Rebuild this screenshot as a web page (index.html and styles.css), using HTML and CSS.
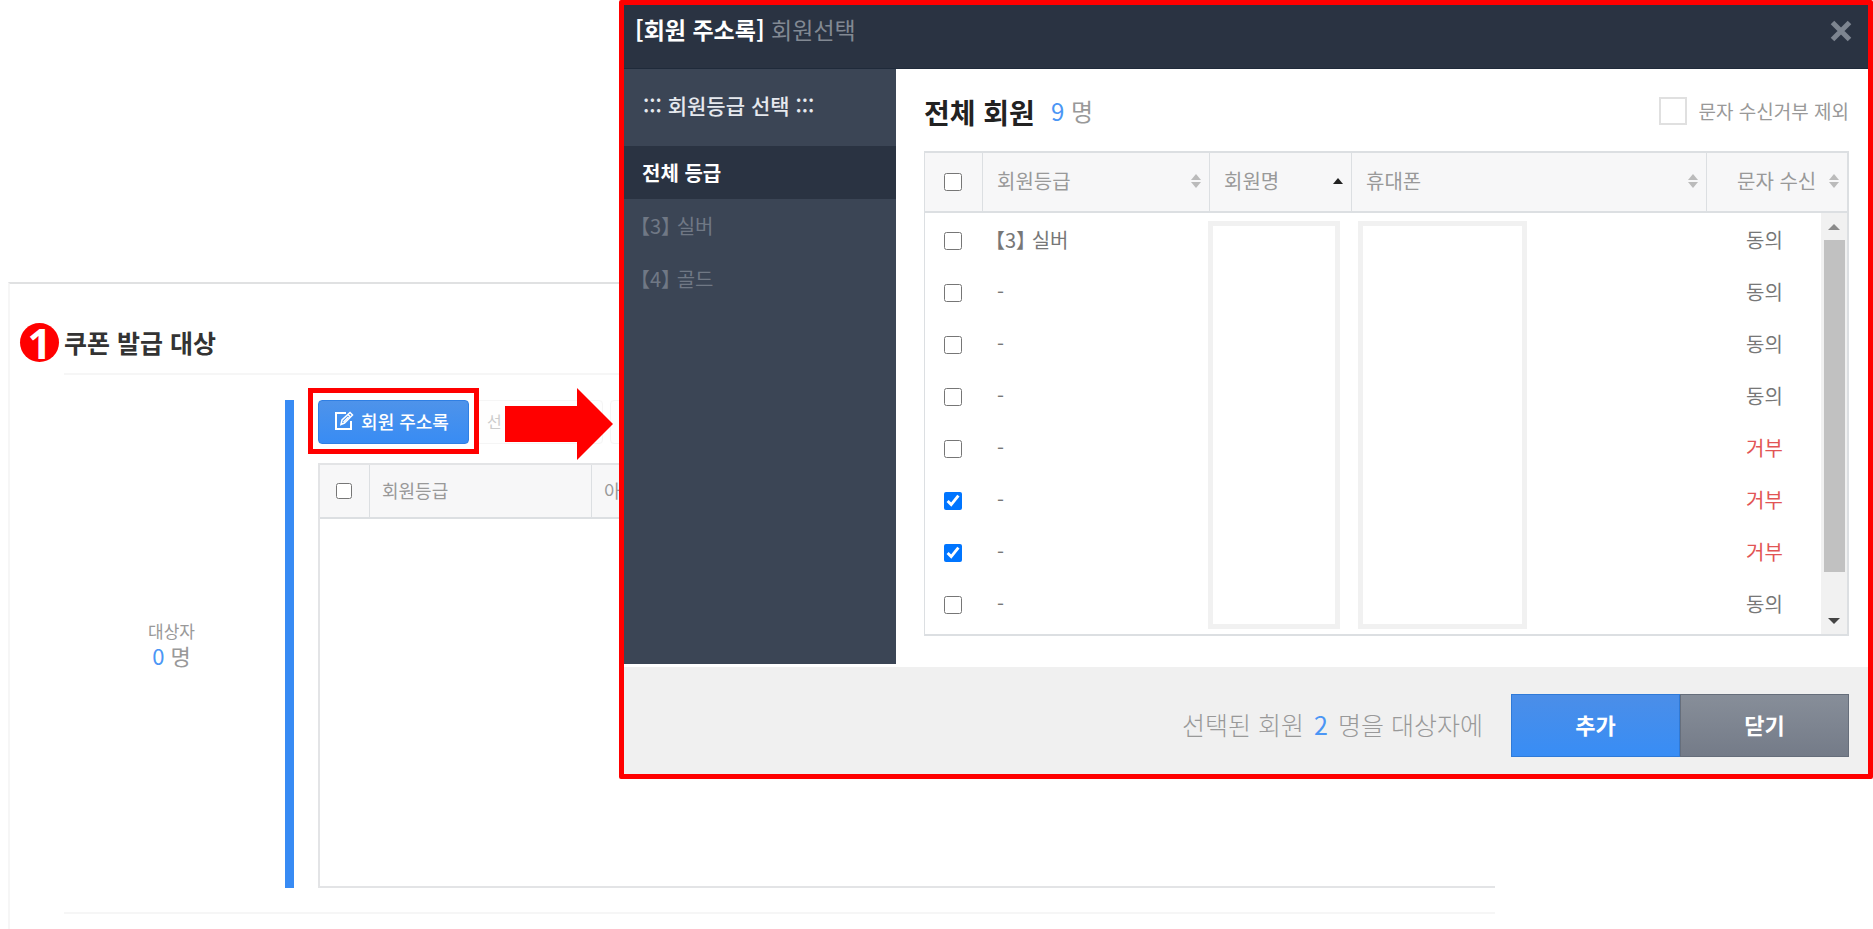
FILE: index.html
```html
<!DOCTYPE html>
<html lang="ko">
<head>
    <meta charset="UTF-8">
    <meta name="viewport" content="width=device-width, initial-scale=1.0">
    <title>쿠폰 발급 대상</title>
    <link rel="stylesheet" href="styles.css">
</head>
<body>
    <main class="panel">
        <span class="step">1</span>
        <h2 class="panel-title">쿠폰 발급 대상</h2>
        <div class="target">
            <div class="target-count">
                <span>대상자</span>
                <span class="target-num"><b>0</b> 명</span>
            </div>
            <div class="target-body">
                <div class="toolbar">
                    <button type="button" class="btn-address">
                        <svg width="20" height="20" viewBox="0 0 20 20" fill="none" stroke="currentColor" stroke-width="2">
                            <path d="M12 2H2V18H17V10"/>
                            <path d="M7 13.500l1-4.500 8-7.500 2.500 2.500-8 8z" stroke-width="1.500"/>
                            <path d="M14 3.500l2.500 2.500M9.500 11l5-5" stroke-width="1.500"/>
                        </svg>
                        회원 주소록
                    </button>
                    <button type="button" class="btn-plain">선</button>
                    <button type="button" class="btn-plain" aria-label="더보기"></button>
                </div>
                <div class="target-list">
                    <table class="target-table">
                        <colgroup><col class="col-tcheck"><col class="col-tgrade"><col></colgroup>
                        <thead>
                            <tr>
                                <th class="check"><input type="checkbox" aria-label="전체 선택"></th>
                                <th>회원등급</th>
                                <th>아이디</th>
                            </tr>
                        </thead>
                    </table>
                </div>
            </div>
        </div>
    </main>

    <div class="focus-box"></div>
    <svg class="arrow" width="108" height="72" viewBox="0 0 108 72"><path d="M0 18H72V0L108 36L72 72V54H0Z" fill="#f00"/></svg>

    <section class="modal">
        <header class="modal-head">
            <h1><strong>[회원 주소록]</strong> 회원선택</h1>
            <button type="button" class="close" aria-label="창 닫기">
                <svg width="22" height="22" viewBox="0 0 22 22" stroke="currentColor" stroke-width="5"><path d="M2.500 2.500L19.500 19.500M19.500 2.500L2.500 19.500"/></svg>
            </button>
        </header>
        <div class="modal-body">
            <nav class="grades">
                <h3>::: 회원등급 선택 :::</h3>
                <a href="#" class="active">전체 등급</a>
                <a href="#" class="bracket">【3】 실버</a>
                <a href="#" class="bracket">【4】 골드</a>
            </nav>
            <div class="members">
                <div class="members-head">
                    <h2>전체 회원</h2>
                    <span class="total"><b>9</b> 명</span>
                    <label class="exclude"><input type="checkbox">문자 수신거부 제외</label>
                </div>
                <div class="list">
                    <table class="member-table">
                        <colgroup><col class="col-check"><col class="col-grade"><col class="col-name"><col><col class="col-sms"></colgroup>
                        <thead>
                            <tr>
                                <th class="check"><input type="checkbox" aria-label="전체 선택"></th>
                                <th><div class="th">회원등급<i class="sort"></i></div></th>
                                <th><div class="th">회원명<i class="sort asc"></i></div></th>
                                <th><div class="th">휴대폰<i class="sort"></i></div></th>
                                <th class="sms-head"><div class="th">문자 수신<i class="sort"></i></div></th>
                            </tr>
                        </thead>
                        <tbody>
                            <tr><td class="check"><input type="checkbox" aria-label="선택"></td><td class="bracket">【3】 실버</td><td></td><td></td><td class="sms">동의</td></tr>
                            <tr><td class="check"><input type="checkbox" aria-label="선택"></td><td>-</td><td></td><td></td><td class="sms">동의</td></tr>
                            <tr><td class="check"><input type="checkbox" aria-label="선택"></td><td>-</td><td></td><td></td><td class="sms">동의</td></tr>
                            <tr><td class="check"><input type="checkbox" aria-label="선택"></td><td>-</td><td></td><td></td><td class="sms">동의</td></tr>
                            <tr><td class="check"><input type="checkbox" aria-label="선택"></td><td>-</td><td></td><td></td><td class="sms deny">거부</td></tr>
                            <tr><td class="check"><input type="checkbox" aria-label="선택" checked></td><td>-</td><td></td><td></td><td class="sms deny">거부</td></tr>
                            <tr><td class="check"><input type="checkbox" aria-label="선택" checked></td><td>-</td><td></td><td></td><td class="sms deny">거부</td></tr>
                            <tr><td class="check"><input type="checkbox" aria-label="선택"></td><td>-</td><td></td><td></td><td class="sms">동의</td></tr>
                        </tbody>
                    </table>
                    <!-- 개인정보 가림 -->
                    <div class="mask mask-name"></div>
                    <div class="mask mask-phone"></div>
                    <div class="scrollbar">
                        <span class="sb-up"></span>
                        <span class="sb-thumb"></span>
                        <span class="sb-down"></span>
                    </div>
                </div>
            </div>
        </div>
        <footer class="modal-foot">
            <p>선택된 회원 <b>2</b> 명을 대상자에</p>
            <div class="actions">
                <button type="button" class="btn-add">추가</button>
                <button type="button" class="btn-close">닫기</button>
            </div>
        </footer>
    </section>
</body>
</html>
```

FILE: styles.css
```css
* {
    box-sizing: border-box;
}
body {
    display: flex;
    flex-direction: column;
    position: relative;
    min-height: 100vh;
    margin: 0;
    background-color: #fff;
    color: #999;
    font-family: "Noto Sans CJK KR", sans-serif;
    font-size: 20px;
}
h1, h2, h3, p {
    margin: 0;
    font-weight: normal;
}
b {
    color: #4b96f5;
    font-weight: normal;
}
button {
    padding: 0;
    border: none;
    font-family: inherit;
    cursor: pointer;
}
input[type="checkbox"] {
    display: block;
    width: 18px;
    height: 18px;
    margin: 0 auto;
}
table {
    width: 100%;
    border-collapse: separate;
    border-spacing: 0;
    table-layout: fixed;
}
th, td {
    padding: 0 0 2px 14px;
    font-weight: normal;
    text-align: left;
    line-height: 28px;
}
th {
    border-right: 1px solid #dcdfe2;
    border-bottom: 2px solid #dcdfe2;
    background-color: #f7f7f8;
}
th:last-child {
    border-right: none;
}
.bracket {
    font-feature-settings: "halt";
}

/* coupon target panel */
.panel {
    position: relative;
    flex: 1;
    margin: 282px 378px 0 8px;
    padding-left: 54px;
    border-top: 2px solid #e0e1e2;
    border-left: 2px solid #f6f6f6;
}
.step {
    position: absolute;
    top: 39px;
    left: 10px;
    width: 39px;
    height: 39px;
    border-radius: 50%;
    background-color: #f00;
    color: #fff;
    font-family: "Open Sans", sans-serif;
    font-size: 42px;
    font-weight: bold;
    line-height: 39px;
    text-align: center;
}
.panel-title {
    padding: 40px 0 13px;
    border-bottom: 2px solid #f6f6f6;
    color: #333;
    font-size: 25px;
    font-weight: bold;
    line-height: 36px;
}
.target {
    display: flex;
    padding: 25px 0 24px;
    border-bottom: 2px solid #f6f6f6;
}
.target-count {
    display: flex;
    flex-direction: column;
    justify-content: center;
    width: 230px;
    padding: 0 6px 2px 0;
    border-right: 9px solid #388bf4;
    font-size: 17px;
    line-height: 25px;
    text-align: center;
}
.target-num {
    font-size: 22px;
}
.target-body {
    flex: 1;
    margin-left: 24px;
}
.toolbar {
    display: flex;
    gap: 7px;
    height: 44px;
    margin-bottom: 19px;
}
.btn-address {
    display: flex;
    align-items: center;
    justify-content: center;
    gap: 7px;
    width: 151px;
    padding: 0 4px 2px 0;
    border: 1px solid #2f7fe4;
    border-radius: 4px;
    background: linear-gradient(#4e93ea, #388cf4);
    color: #fff;
    font-size: 18px;
    font-weight: 500;
}
.btn-plain {
    width: 127px;
    padding: 0 0 2px 10px;
    border: 1px solid #f5f5f5;
    border-radius: 4px;
    background-color: #fefefe;
    color: #ccc;
    font-size: 16px;
    text-align: left;
}
.target-list {
    height: 425px;
    border: 2px solid #e3e4e6;
    border-right: none;
}
.target-table th {
    height: 54px;
    padding-left: 12px;
    font-size: 18px;
}
.target-table input {
    width: 16px;
    height: 16px;
}
.target-table .check, .member-table .check {
    padding: 0 2px 0 0;
}
.col-tcheck {
    width: 50px;
}
.col-tgrade {
    width: 222px;
}

/* callouts */
.focus-box {
    position: absolute;
    top: 388px;
    left: 308px;
    width: 171px;
    height: 66px;
    border: 5px solid #f00;
}
.arrow {
    position: absolute;
    top: 388px;
    left: 505px;
}

/* member popup */
.modal {
    position: absolute;
    top: 0;
    right: 0;
    left: 619px;
    border: 5px solid #f00;
    border-radius: 2px;
    background-color: #fff;
}
.modal-head {
    display: flex;
    justify-content: space-between;
    height: 64px;
    padding: 8px 16px 0 11px;
    border-bottom: 1px solid #1f2a3a;
    background-color: #2a3342;
}
.modal-head h1 {
    color: #828993;
    font-size: 23px;
    line-height: 32px;
}
.modal-head strong {
    color: #fff;
}
.close {
    height: 36px;
    background: none;
    color: #7d8590;
}
.close svg {
    display: block;
}
.modal-body {
    display: flex;
    margin-bottom: 3px;
}
.grades {
    width: 272px;
    background-color: #3b4555;
}
.grades h3 {
    padding: 20px 0 25px 19px;
    color: #e6e9ee;
    font-size: 21px;
    font-weight: 500;
    line-height: 32px;
}
.grades a {
    display: block;
    padding-left: 18px;
    color: #707885;
    line-height: 53px;
    text-decoration: none;
}
.grades .bracket {
    padding-left: 16px;
}
.grades .active {
    background-color: #2a3342;
    color: #fff;
    font-weight: bold;
}
.members {
    flex: 1;
    padding: 22px 19px 28px 28px;
}
.members-head {
    display: flex;
    align-items: center;
    height: 42px;
    margin-bottom: 18px;
}
.members-head h2 {
    color: #222;
    font-size: 28px;
    font-weight: bold;
}
.total {
    margin-left: 16px;
    padding-bottom: 3px;
    font-size: 24px;
}
.exclude {
    display: flex;
    align-items: center;
    gap: 12px;
    margin-left: auto;
    padding-bottom: 3px;
    font-size: 19px;
}
.exclude input[type="checkbox"] {
    width: 28px;
    height: 28px;
    border: 2px solid #e0e0e0;
    background-color: #fff;
    appearance: none;
}
.exclude input[type="checkbox"]:checked {
    background-color: #388bf4;
}
.list {
    position: relative;
    padding-bottom: 3px;
    border: 1px solid #dcdfe2;
    border-width: 2px 2px 2px 1px;
}
.member-table th {
    height: 60px;
}
.member-table tbody::before {
    content: "";
    display: block;
    height: 2px;
}
.member-table td {
    height: 52px;
    padding-bottom: 2px;
    color: #777;
}
.member-table .bracket {
    padding-left: 12px;
}
.col-check {
    width: 58px;
}
.col-grade {
    width: 227px;
}
.col-name {
    width: 142px;
}
.col-sms {
    width: 140px;
}
.th {
    display: flex;
    align-items: center;
    justify-content: space-between;
    padding-right: 8px;
}
.member-table .sms-head {
    padding-left: 30px;
}
.member-table .sms {
    padding-left: 39px;
}
.member-table .deny {
    color: #e25555;
}
.sort::before, .sort::after {
    content: "";
    display: block;
    border: 5px solid transparent;
    border-top-width: 0;
    border-bottom: 6px solid #bbb;
}
.sort::after {
    margin-top: 2px;
    border-top: 6px solid #bbb;
    border-bottom-width: 0;
}
.sort.asc::before {
    border-bottom-color: #222;
}
.sort.asc::after {
    display: none;
}
.mask {
    position: absolute;
    top: 68px;
    height: 408px;
    border: 5px solid #f1f1f1;
    background-color: #fff;
}
.mask-name {
    left: 283px;
    width: 132px;
}
.mask-phone {
    left: 433px;
    width: 169px;
}
.scrollbar {
    display: flex;
    flex-direction: column;
    align-items: center;
    position: absolute;
    top: 60px;
    right: 0;
    bottom: 0;
    width: 26px;
    padding: 11px 0 10px;
    background-color: #f1f1f1;
}
.sb-up {
    border: 6px solid transparent;
    border-top-width: 0;
    border-bottom: 6px solid #8a8a8a;
}
.sb-thumb {
    width: 21px;
    height: 332px;
    margin-top: 10px;
    background-color: #c1c1c1;
}
.sb-down {
    margin-top: auto;
    border: 6px solid transparent;
    border-top: 6px solid #444;
    border-bottom-width: 0;
}
.modal-foot {
    display: flex;
    align-items: center;
    justify-content: flex-end;
    gap: 28px;
    padding: 27px 19px 17px;
    background-color: #f0f0f0;
}
.modal-foot p {
    padding-bottom: 4px;
    font-size: 25px;
    font-weight: 300;
    line-height: 36px;
}
.modal-foot b {
    margin: 0 3px;
}
.actions {
    display: flex;
}
.actions button {
    width: 169px;
    height: 63px;
    padding-bottom: 3px;
    color: #fff;
    font-size: 22px;
    font-weight: bold;
}
.btn-add {
    border: 1px solid #2f7ad8;
    background: linear-gradient(#4b8ee8, #388df5);
}
.btn-close {
    border: 1px solid #666e7b;
    background: linear-gradient(#878e99, #747b88);
}
```
